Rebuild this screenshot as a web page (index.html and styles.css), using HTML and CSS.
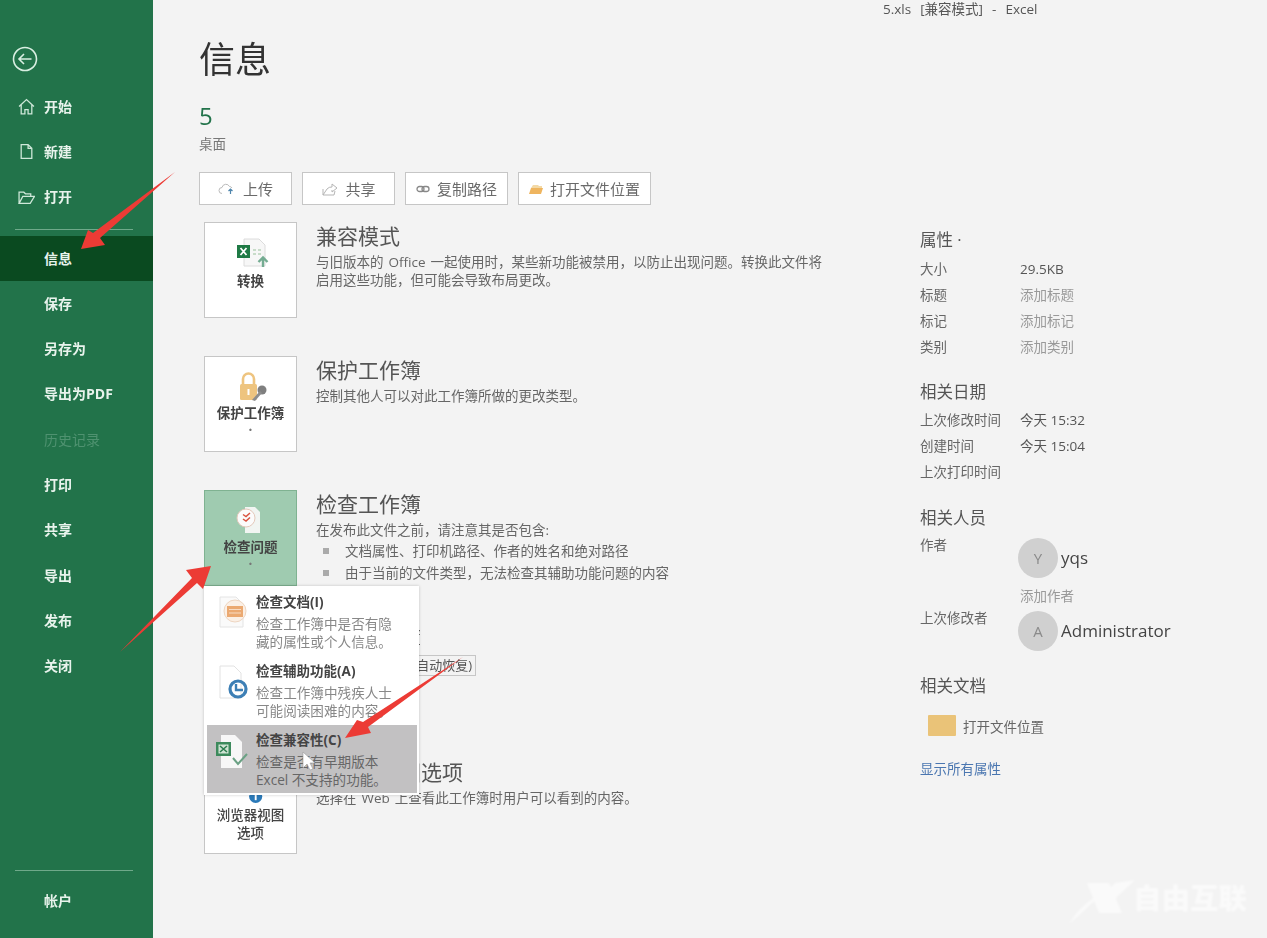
FILE: index.html
```html
<!DOCTYPE html>
<html lang="zh-CN">
<head>
<meta charset="UTF-8">
<meta name="viewport" content="width=device-width, initial-scale=1.0">
<title>5.xls - Excel</title>
<link rel="stylesheet" href="styles.css">
</head>
<body>

<div class="app">

<!-- 左侧菜单 -->
<nav class="sidebar">
    <div class="back">
        <svg width="26" height="26" viewBox="0 0 26 26" fill="none" stroke="#d9efe2" stroke-width="1.6"><circle cx="13" cy="13" r="11.5"/><path d="M19.5 13H7M12 8l-5 5 5 5"/></svg>
    </div>
    <a class="nav-item">
        <svg class="nav-icon" viewBox="0 0 16 16" fill="none" stroke="#cfe8d9" stroke-width="1.2"><path d="M1 8l7-6.500L15 8M3 6.500V15h3.500v-4h3v4H13V6.500"/></svg>
        开始
    </a>
    <a class="nav-item">
        <svg class="nav-icon" viewBox="0 0 16 16" fill="none" stroke="#cfe8d9" stroke-width="1.2"><path d="M3 1.500h6.500L13 5v9.500H3zM9.500 1.500V5H13"/></svg>
        新建
    </a>
    <a class="nav-item">
        <svg class="nav-icon" viewBox="0 0 16 16" fill="none" stroke="#cfe8d9" stroke-width="1.2"><path d="M1 13.500V3h4.500l1.500 1.500h5V7M1 13.500h10.500L15.500 7H4.500z"/></svg>
        打开
    </a>
    <div class="nav-line"></div>
    <a class="nav-item active">信息</a>
    <a class="nav-item">保存</a>
    <a class="nav-item">另存为</a>
    <a class="nav-item">导出为PDF</a>
    <a class="nav-item disabled">历史记录</a>
    <a class="nav-item">打印</a>
    <a class="nav-item">共享</a>
    <a class="nav-item">导出</a>
    <a class="nav-item">发布</a>
    <a class="nav-item">关闭</a>
    <div class="nav-bottom">
        <div class="nav-line"></div>
        <a class="nav-item">帐户</a>
    </div>
</nav>

<div class="main">
    <div class="titlebar">5.xls&nbsp; [兼容模式] &nbsp;- &nbsp;Excel</div>

    <div class="columns">
        <!-- 信息区 -->
        <div class="info">
            <h1>信息</h1>
            <div class="file-name">5</div>
            <div class="file-path">桌面</div>

            <div class="actions">
                <button class="action">
                    <svg width="18" height="12" viewBox="0 0 18 12" fill="none"><path d="M4 10.500a3 3 0 0 1 0-6 4 4 0 0 1 7.500-1 3 3 0 0 1 2.500 1.500" stroke="#bbb"/><path d="M12.500 11V6M10.500 8l2-2 2 2" stroke="#4f86ad" stroke-width="1.2"/></svg>
                    上传
                </button>
                <button class="action">
                    <svg width="17" height="14" viewBox="0 0 17 14" fill="none" stroke="#b5b5b5"><path d="M2 7v6h11l1-4M2 13l4-6a6 6 0 0 1 5-2V2l5 4-5 4V8"/></svg>
                    共享
                </button>
                <button class="action">
                    <svg width="14" height="8" viewBox="0 0 14 8" fill="none" stroke="#888" stroke-width="1.300"><rect x="1" y="1.500" width="7" height="5" rx="2.500"/><rect x="6" y="1.500" width="7" height="5" rx="2.500"/></svg>
                    复制路径
                </button>
                <button class="action">
                    <svg width="14" height="10" viewBox="0 0 14 10"><path d="M2 4l2-3h5l1 1h3v2z" fill="#f3d9a6"/><path d="M0 10l2-6h12l-2 6z" fill="#efb55f"/></svg>
                    打开文件位置
                </button>
            </div>

            <section class="block">
                <div class="big-btn">
                    <svg class="big-icon" width="36" height="32" viewBox="0 0 36 32"><path d="M11 2h15l6 6v21H11z" fill="#f7f7f7" stroke="#dcdcdc"/><rect x="4" y="8" width="13" height="13" fill="#1f7a45"/><path d="M7.500 11l6 7M13.500 11l-6 7" stroke="#fff" stroke-width="1.800"/><path d="M20 12h3v2h-3zM25 12h3v2h-3zM20 16h3v2h-3zM25 16h3v2h-3z" fill="#c8dcc9"/><path d="M30 30v-9M25.500 25l4.500-4.500 4.500 4.500" stroke="#74ac92" stroke-width="2.400" fill="none"/></svg>
                    <span>转换</span>
                </div>
                <div class="block-text">
                    <h2>兼容模式</h2>
                    <p>与旧版本的 Office 一起使用时，某些新功能被禁用，以防止出现问题。转换此文件将<br>启用这些功能，但可能会导致布局更改。</p>
                </div>
            </section>

            <section class="block">
                <div class="big-btn has-dot">
                    <svg class="big-icon" width="36" height="32" viewBox="0 0 36 32"><path d="M10 14V8a5.500 5.500 0 0 1 11 0v6" fill="none" stroke="#eec47f" stroke-width="2.600"/><rect x="7" y="13" width="17" height="16" rx="1.500" fill="#eec47f"/><rect x="14.500" y="18" width="2" height="6" fill="#fff"/><circle cx="29" cy="19" r="4.500" fill="#7f7f7f"/><path d="M27 20l-8 9 3 1 7-8z" fill="#8d8d8d"/></svg>
                    <span>保护工作簿</span>
                    <i class="dot">·</i>
                </div>
                <div class="block-text">
                    <h2>保护工作簿</h2>
                    <p>控制其他人可以对此工作簿所做的更改类型。</p>
                </div>
            </section>

            <section class="block">
                <div class="big-btn selected has-dot">
                    <svg class="big-icon" width="36" height="32" viewBox="0 0 36 32"><path d="M12 2h10l5 5v21H12z" fill="#f1f5f2"/><circle cx="13" cy="13" r="9" fill="#fbfbfb" stroke="#e4c9bb"/><path d="M10 9.500l3 2 4-3.500M10 14l3 2 4-3.500" fill="none" stroke="#d9523f" stroke-width="1.500"/></svg>
                    <span>检查问题</span>
                    <i class="dot">·</i>
                </div>
                <div class="block-text">
                    <h2>检查工作簿</h2>
                    <p>在发布此文件之前，请注意其是否包含:</p>
                    <ul>
                        <li>文档属性、打印机路径、作者的姓名和绝对路径</li>
                        <li>由于当前的文件类型，无法检查其辅助功能问题的内容</li>
                    </ul>
                </div>
            </section>

            <section class="block">
                <div class="big-btn empty"></div>
                <div class="block-text">
                    <h2>管理工作簿</h2>
                    <span class="mini">今天 15:04 (自动恢复)</span>
                </div>
            </section>

            <section class="block">
                <div class="big-btn bottom-label">
                    <svg class="big-icon" width="36" height="32" viewBox="0 0 36 32"><circle cx="23" cy="25" r="7" fill="#2a79b8"/><rect x="22" y="22" width="2" height="7" fill="#fff"/></svg>
                    <span>浏览器视图<br>选项</span>
                </div>
                <div class="block-text">
                    <h2>浏览器视图选项</h2>
                    <p>选择在 Web 上查看此工作簿时用户可以看到的内容。</p>
                </div>
            </section>
        </div>

        <!-- 右侧属性 -->
        <aside class="props">
            <h3>属性 ·</h3>
            <div class="prop first"><span>大小</span><b>29.5KB</b></div>
            <div class="prop"><span>标题</span><b class="hint">添加标题</b></div>
            <div class="prop"><span>标记</span><b class="hint">添加标记</b></div>
            <div class="prop"><span>类别</span><b class="hint">添加类别</b></div>

            <h3 class="group">相关日期</h3>
            <div class="prop dates"><span>上次修改时间</span><b>今天 15:32</b></div>
            <div class="prop"><span>创建时间</span><b>今天 15:04</b></div>
            <div class="prop"><span>上次打印时间</span></div>

            <h3 class="group people">相关人员</h3>
            <div class="person first">
                <span class="person-label">作者</span>
                <span class="avatar">Y</span>
                <span class="person-name">yqs</span>
            </div>
            <div class="add-author">添加作者</div>
            <div class="person">
                <span class="person-label">上次修改者</span>
                <span class="avatar">A</span>
                <span class="person-name">Administrator</span>
            </div>

            <h3 class="group docs">相关文档</h3>
            <div class="open-folder">
                <span class="folder"></span>
                打开文件位置
            </div>
            <a class="show-all">显示所有属性</a>
        </aside>
    </div>
</div>

<!-- 检查问题下拉菜单 -->
<div class="menu">
    <div class="menu-item">
        <svg class="menu-icon" width="34" height="36" viewBox="0 0 34 36"><path d="M6 2h16l7 7v23H6z" fill="#fafafa" stroke="#e4e4e4"/><circle cx="21" cy="16" r="11" fill="#fbf0e6" stroke="#eed6c2"/><rect x="13" y="11" width="16" height="11" fill="#eba971"/><path d="M15 14.500h12M15 18h12" stroke="#f8dcc4"/></svg>
        <div>
            <h4>检查文档(I)</h4>
            <p>检查工作簿中是否有隐<br>藏的属性或个人信息。</p>
        </div>
    </div>
    <div class="menu-item">
        <svg class="menu-icon" width="34" height="36" viewBox="0 0 34 36"><path d="M6 2h14l7 7v25H6z" fill="#fff" stroke="#e2e2e2"/><circle cx="24" cy="25" r="8" fill="none" stroke="#3d7fb5" stroke-width="3.200"/><path d="M22 20v6h7" fill="none" stroke="#3d7fb5" stroke-width="2.400"/></svg>
        <div>
            <h4>检查辅助功能(A)</h4>
            <p>检查工作簿中残疾人士<br>可能阅读困难的内容。</p>
        </div>
    </div>
    <div class="menu-item hover">
        <svg class="menu-icon" width="34" height="36" viewBox="0 0 34 36"><path d="M7 2h14l7 7v26H7z" fill="#f7f7f7"/><rect x="2" y="9" width="15" height="14" fill="#3c8a5c"/><rect x="4.500" y="11.500" width="10" height="9" fill="#cfe3d3"/><path d="M6 13l7 6M13 13l-7 6" stroke="#2c7d4f" stroke-width="1.600"/><path d="M19 25l5 6 9-10" fill="none" stroke="#6ba184" stroke-width="2"/></svg>
        <div>
            <h4>检查兼容性(C)</h4>
            <p>检查是否有早期版本<br>Excel 不支持的功能。</p>
        </div>
    </div>
</div>

<!-- 录屏上画的箭头和光标 -->
<svg class="overlay" width="1267" height="938" viewBox="0 0 1267 938">
    <path d="M175 172L100 238L105 245L81 249L88 230L93 233z" fill="#ec3b35"/>
    <path d="M120 652L192 578L186 570L211 566L203 589L197 583z" fill="#ec3b35"/>
    <path d="M463 657L368 727L371 733L345 738L357 720L363 722z" fill="#ec3b35"/>
    <path d="M303 752L303 768L307 764L310 770L313 769L310 763L315 763z" fill="#fff" stroke="#999" stroke-width=".6"/>
</svg>
<svg class="wm-logo" width="70" height="46" viewBox="0 0 70 46">
    <path d="M18 3h22l13 30H30z" fill="#fff"/>
    <path d="M66 0L34 30 26 24 46 3z" fill="#fff"/>
    <path d="M0 44C8 30 20 20 34 12 22 24 12 34 0 44z" fill="#fff"/>
</svg>
<div class="watermark">自由互联</div>

</div>

</body>
</html>
```

FILE: styles.css
```css
* {
    box-sizing: border-box;
}

html, body {
    margin: 0;
    height: 100%;
}

body {
    font-family: "Open Sans", "Noto Sans CJK SC", sans-serif;
    font-size: 13px;
    color: #555;
    background: #f3f3f3;
    overflow: hidden;
}

.app {
    position: relative;
    display: flex;
    width: 1267px;
    height: 938px;
    filter: blur(.55px);
}

/* 左侧菜单 */
.sidebar {
    width: 153px;
    flex: none;
    display: flex;
    flex-direction: column;
    padding-top: 46px;
    padding-bottom: 14px;
    background: #22734a;
    color: #fff;
}

.back {
    height: 38px;
    padding-left: 12px;
}

.nav-item {
    display: flex;
    align-items: center;
    height: 45.300px;
    padding-left: 44px;
    padding-bottom: 2px;
    position: relative;
    font-size: 14px;
    font-weight: 700;
    color: #e8f3ec;
}

.nav-item.active {
    background: #0a4a20;
}

.nav-item.disabled {
    color: #4f9270;
    font-weight: 400;
}

.nav-icon {
    position: absolute;
    left: 18px;
    top: 14px;
    width: 17px;
    height: 17px;
}

.nav-line {
    height: 1px;
    margin: 9px 20px 6px 15px;
    background: #6fa98a;
}

.nav-bottom {
    margin-top: auto;
}

.nav-bottom .nav-line {
    margin-bottom: 8px;
}

/* 主区域 */
.main {
    flex: 1;
    min-width: 0;
}

.titlebar {
    height: 18px;
    padding-left: 730px;
    font-size: 13.500px;
    line-height: 18px;
    word-spacing: 1px;
    color: #555;
}

.columns {
    display: grid;
    grid-template-columns: 767px 1fr;
}

.info {
    padding-left: 46px;
}

h1 {
    margin: 19px 0 0;
    font-size: 36px;
    font-weight: 400;
    line-height: 46px;
    color: #333;
}

.file-name {
    margin-top: 18px;
    font-size: 24px;
    line-height: 30px;
    color: #22734a;
}

.file-path {
    margin-top: 4px;
    font-size: 13.500px;
    line-height: 18px;
    color: #777;
}

.actions {
    display: flex;
    gap: 10px;
    margin-top: 19px;
}

.action {
    display: flex;
    align-items: center;
    justify-content: center;
    gap: 7px;
    height: 33px;
    padding: 0 10px;
    min-width: 93px;
    font: inherit;
    font-size: 15px;
    color: #6a6a6a;
    background: #fff;
    border: 1px solid #c6c6c6;
}

.block {
    display: flex;
    height: 96px;
    margin: 17px 0 38px 5px;
}

.block + .block {
    margin-top: 0;
}

.big-btn {
    position: relative;
    display: flex;
    flex-direction: column;
    align-items: center;
    width: 93px;
    height: 96px;
    flex: none;
    padding-top: 14px;
    background: #fff;
    border: 1px solid #c6c6c6;
    font-size: 13.500px;
    font-weight: 700;
    line-height: 18px;
    color: #444;
    text-align: center;
}

.big-btn.selected {
    background: #9fcbb0;
    border-color: #7fb291;
}

.big-btn.empty {
    background: none;
    border: 0;
}

.big-btn.bottom-label {
    justify-content: flex-end;
    padding-bottom: 11px;
    font-weight: 500;
}

.big-icon {
    display: block;
    margin-bottom: 3px;
}

.has-dot .big-icon {
    margin-bottom: 1px;
}

.dot {
    margin-top: 1px;
    font-style: normal;
    line-height: 14px;
    color: #777;
}

.block-text {
    padding-left: 19px;
}

h2 {
    margin: 0;
    font-size: 21px;
    font-weight: 400;
    line-height: 29px;
    color: #555;
}

.block-text p {
    margin: 2px 0 0;
    font-size: 13.500px;
    line-height: 18px;
    word-spacing: 1.500px;
    color: #666;
}

.block-text ul {
    margin: 1px 0 0;
    padding: 0;
    list-style: none;
}

.block-text li {
    position: relative;
    padding-left: 29px;
    font-size: 13.500px;
    line-height: 22px;
    color: #666;
}

.block-text li::before {
    content: "";
    position: absolute;
    left: 7px;
    top: 8px;
    width: 6px;
    height: 6px;
    background: #aaa;
}

.mini {
    display: block;
    width: 160px;
    margin-top: 2px;
    padding-right: 3px;
    font-size: 13px;
    line-height: 19px;
    text-align: right;
    border: 1px solid #c6c6c6;
    white-space: nowrap;
}

/* 右侧属性 */
.props {
    padding-top: 210px;
}

h3 {
    margin: 0;
    font-size: 16.500px;
    font-weight: 400;
    line-height: 24px;
    color: #555;
}

h3.group {
    margin-top: 20px;
}

h3.people {
    margin-top: 21px;
}

h3.docs {
    margin-top: 22px;
}

.prop {
    display: flex;
    height: 26px;
    font-size: 13.500px;
    line-height: 26px;
    color: #666;
}

.prop.first {
    margin-top: 4px;
}

.prop.dates {
    margin-top: 3px;
}

.prop span {
    width: 100px;
    flex: none;
    white-space: nowrap;
}

.prop b {
    font-weight: 400;
    color: #555;
}

.prop b.hint {
    color: #999;
}

.person {
    display: flex;
    align-items: flex-start;
    height: 47px;
    font-size: 13.500px;
    line-height: 26px;
}

.person.first {
    margin-top: 2px;
    height: 55px;
}

.person-label {
    width: 98px;
    flex: none;
    color: #666;
}

.avatar {
    width: 40px;
    height: 40px;
    flex: none;
    margin-top: 6px;
    border-radius: 50%;
    background: #d0d0d0;
    color: #8a8a8a;
    font-size: 15px;
    line-height: 40px;
    text-align: center;
}

.person-name {
    margin: 13px 0 0 3px;
    font-size: 17px;
    color: #444;
}

.add-author {
    padding-left: 100px;
    font-size: 13.500px;
    line-height: 18px;
    color: #999;
}

.open-folder {
    display: flex;
    align-items: center;
    gap: 7px;
    height: 21px;
    margin-top: 17px;
    padding-left: 8px;
    font-size: 13.500px;
    color: #666;
}

.folder {
    width: 28px;
    height: 21px;
    border-radius: 1px;
    background: #eac378;
}

.show-all {
    display: block;
    margin-top: 24px;
    font-size: 13.500px;
    line-height: 18px;
    color: #4a76b0;
}

/* 下拉菜单 */
.menu {
    position: absolute;
    left: 204px;
    top: 586px;
    width: 215px;
    height: 209px;
    padding: 1px 2px 0 3px;
    background: #fff;
    box-shadow: 0 0 3px rgba(0, 0, 0, .2);
}

.menu-item {
    display: flex;
    height: 69px;
    padding: 6px 0 0 49px;
    position: relative;
}

.menu-item.hover {
    height: 68px;
    background: #c2c1c2;
}

.menu-icon {
    position: absolute;
    left: 7px;
    top: 8px;
}

h4 {
    margin: 0 0 4px;
    font-size: 13.500px;
    font-weight: 700;
    line-height: 18px;
    color: #444;
}

.menu-item p {
    margin: 0;
    font-size: 13.600px;
    line-height: 18px;
    color: #888;
}

.menu-item.hover p {
    color: #666;
}

/* 箭头和水印 */
.overlay {
    position: absolute;
    left: 0;
    top: 0;
    pointer-events: none;
}

.wm-logo {
    position: absolute;
    left: 1069px;
    top: 880px;
    opacity: .6;
    filter: blur(1px);
}

.watermark {
    position: absolute;
    left: 1133px;
    top: 878px;
    font-size: 28.500px;
    font-weight: 900;
    line-height: 40px;
    color: rgba(255, 255, 255, .6);
    filter: blur(1px);
}
```
